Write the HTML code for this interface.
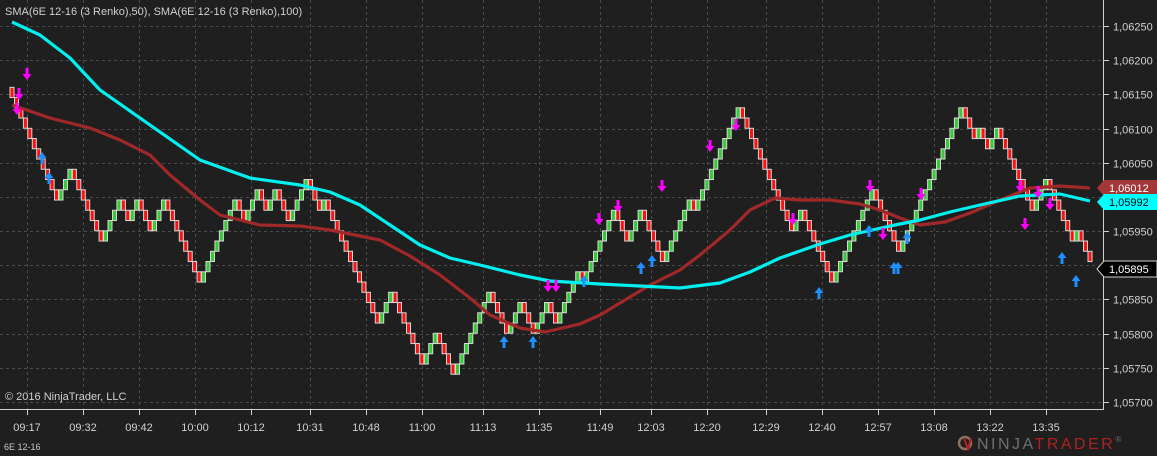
<!DOCTYPE html>
<html><head><meta charset="utf-8">
<style>
html,body{margin:0;padding:0;background:#1f1f1f;width:1157px;height:456px;overflow:hidden}
svg{display:block}
text{font-family:"Liberation Sans",sans-serif}
</style></head><body>
<svg id="s" width="1157" height="456" xmlns="http://www.w3.org/2000/svg">
<rect width="1157" height="456" fill="#1f1f1f"/>
<g id="grid" stroke="#4a4a4a" stroke-dasharray="3,3" stroke-width="1"></g>
<g id="bricks"></g>
<polyline id="red" fill="none" stroke="#a02828" stroke-width="3.2" stroke-linejoin="round"/>
<polyline id="cyan" fill="none" stroke="#00f0f0" stroke-width="3.2" stroke-linejoin="round"/>
<g id="arrows"></g>
<line x1="0" y1="409.5" x2="1103.5" y2="409.5" stroke="#d0d0d0"/>
<line x1="1103.5" y1="0" x2="1103.5" y2="410" stroke="#d0d0d0"/>
<g id="axis" fill="#d0d0d0" font-size="11"></g>
<text x="5" y="15" fill="#d0d0d0" font-size="11">SMA(6E 12-16 (3 Renko),50), SMA(6E 12-16 (3 Renko),100)</text>
<text x="5" y="400" fill="#d0d0d0" font-size="11">© 2016 NinjaTrader, LLC</text>
<text x="4" y="450" fill="#c8c8c8" font-size="9">6E 12-16</text>
<g transform="translate(965,443)">
<circle cx="0" cy="0" r="6" fill="none" stroke="#8a7060" stroke-width="2.5"/>
<path d="M-1,-5 L3,6 L6,-5" fill="none" stroke="#b02020" stroke-width="2"/>
<text x="12" y="6" font-size="16" fill="#707070" letter-spacing="2.5">NINJA<tspan fill="#b02020">TRADER</tspan><tspan font-size="8" dy="-7">®</tspan></text>
</g>
</svg>
<script>
const NS="http://www.w3.org/2000/svg";
function el(t,a,p){const e=document.createElementNS(NS,t);for(const k in a)e.setAttribute(k,a[k]);if(p)p.appendChild(e);return e;}
const grid=document.getElementById('grid'),axis=document.getElementById('axis');
const prices=["1,06250","1,06200","1,06150","1,06100","1,06050","1,06000","1,05950","1,05900","1,05850","1,05800","1,05750","1,05700"];
prices.forEach((p,i)=>{const y=Math.round(26+i*34.18)+0.5;
 el('line',{x1:0,y1:y,x2:1103,y2:y},grid);
 el('line',{x1:1103,y1:y,x2:1109,y2:y,stroke:'#d0d0d0'},axis);
 if(i!=5&&i!=7){const t=el('text',{x:1113,y:y+4,'font-size':11},axis);t.textContent=p;}
});
const times=[[27,"09:17"],[83,"09:32"],[139,"09:42"],[195,"10:00"],[251,"10:12"],[310,"10:31"],[366,"10:48"],[422,"11:00"],[483,"11:13"],[539,"11:35"],[600,"11:49"],[651,"12:03"],[707,"12:20"],[766,"12:29"],[822,"12:40"],[878,"12:57"],[934,"13:08"],[990,"13:22"],[1046,"13:35"]];
times.forEach(([x,t])=>{el('line',{x1:x+.5,y1:0,x2:x+.5,y2:409},grid);
 el('line',{x1:x+.5,y1:409,x2:x+.5,y2:415,stroke:'#d0d0d0'},axis);
 const e=el('text',{x:x,y:431,'font-size':11,'text-anchor':'middle'},axis);e.textContent=t;});
// price markers
function marker(y,fill,txt,tc,stroke){
 el('path',{d:`M1097,${y} L1104,${y-8} L1157,${y-8} L1157,${y+8} L1104,${y+8} Z`,fill:fill,stroke:stroke||'none'},axis);
 const t=el('text',{x:1109,y:y+4,'font-size':11,fill:tc},axis);t.textContent=txt;}
marker(188,'#a33636','1,06012','#fff');
marker(202,'#00ffff','1,05992','#000');
marker(269,'#000','1,05895','#fff','#d0d0d0');
// bricks
const wp=[92,200,172,245,205,225,205,235,210,260,282,210,230,195,215,190,225,210,185,220,210,240,330,295,370,340,380,295,340,310,340,310,330,280,290,225,215,250,215,255,262,200,220,110,195,240,215,285,260,195,260,255,200,185,110,145,130,150,130,215,195,185,245,240,255,270];
const H=10.25;let lev=[];let cur=Math.round(wp[0]/H);
for(let i=1;i<wp.length;i++){const tg=Math.round(wp[i]/H);while(cur!=tg){const d=tg>cur?1:-1;lev.push([cur,d]);cur+=d;}}
const bg=document.getElementById('bricks');const n=lev.length;const step=(1090-12)/(n-1);
lev.forEach(([l,d],i)=>{const x=12+i*step;let y0=l*H,y1=(l+d)*H;const top=Math.min(y0,y1);
 el('rect',{x:(x-2).toFixed(1),y:(top-5).toFixed(1),width:4,height:H,fill:d<0?'#33cc33':'#ff1010',stroke:'#d8d8d8','stroke-width':1},bg);});
function pl(id,pts){document.getElementById(id).setAttribute('points',pts.map(p=>p.join(',')).join(' '));}
pl('cyan',[[12,22],[40,35],[70,58],[100,90],[150,125],[200,160],[250,178],[300,185],[330,192],[360,205],[390,225],[420,245],[450,258],[480,265],[520,275],[550,281],[600,284],[640,286],[680,288],[720,283],[750,272],[780,258],[820,244],[850,235],[890,226],[920,220],[950,212],[980,205],[1020,196],[1060,194],[1090,201]]);
pl('red',[[12,105],[50,118],[90,128],[120,140],[150,155],[170,175],[200,200],[220,215],[260,225],[300,226],[330,230],[360,236],[380,240],[410,256],[440,275],[470,298],[490,315],[520,328],[545,332],[580,324],[600,315],[625,300],[650,285],[680,270],[700,255],[730,230],[750,210],[775,198],[800,200],[830,200],[860,204],[880,210],[900,218],[920,225],[945,222],[970,213],[1000,200],[1030,188],[1060,186],[1090,188]]);
// arrows
const ag=document.getElementById('arrows');
function down(x,y,c){el('path',{d:`M${x-1.5},${y-12} h3 v6 h3 l-4.5,6 l-4.5,-6 h3 z`,fill:c},ag);}
function up(x,y,c){el('path',{d:`M${x-1.5},${y+12} h3 v-6 h3 l-4.5,-6 l-4.5,6 h3 z`,fill:c},ag);}
const M='#ff00ff',B='#1e90ff';
[[27,80],[19,100],[17,115],[548,292],[556,292],[599,225],[618,212],[662,192],[736,131],[710,152],[870,192],[921,200],[1020,192],[1038,198],[1050,210],[1025,230],[793,225],[883,240]].forEach(a=>down(a[0],a[1],M));
[[42,152],[49,172],[504,336],[533,336],[584,275],[641,262],[652,255],[819,287],[869,225],[898,262],[907,232],[1062,252],[1076,275],[894,262]].forEach(a=>up(a[0],a[1],B));
</script>
</body></html>
